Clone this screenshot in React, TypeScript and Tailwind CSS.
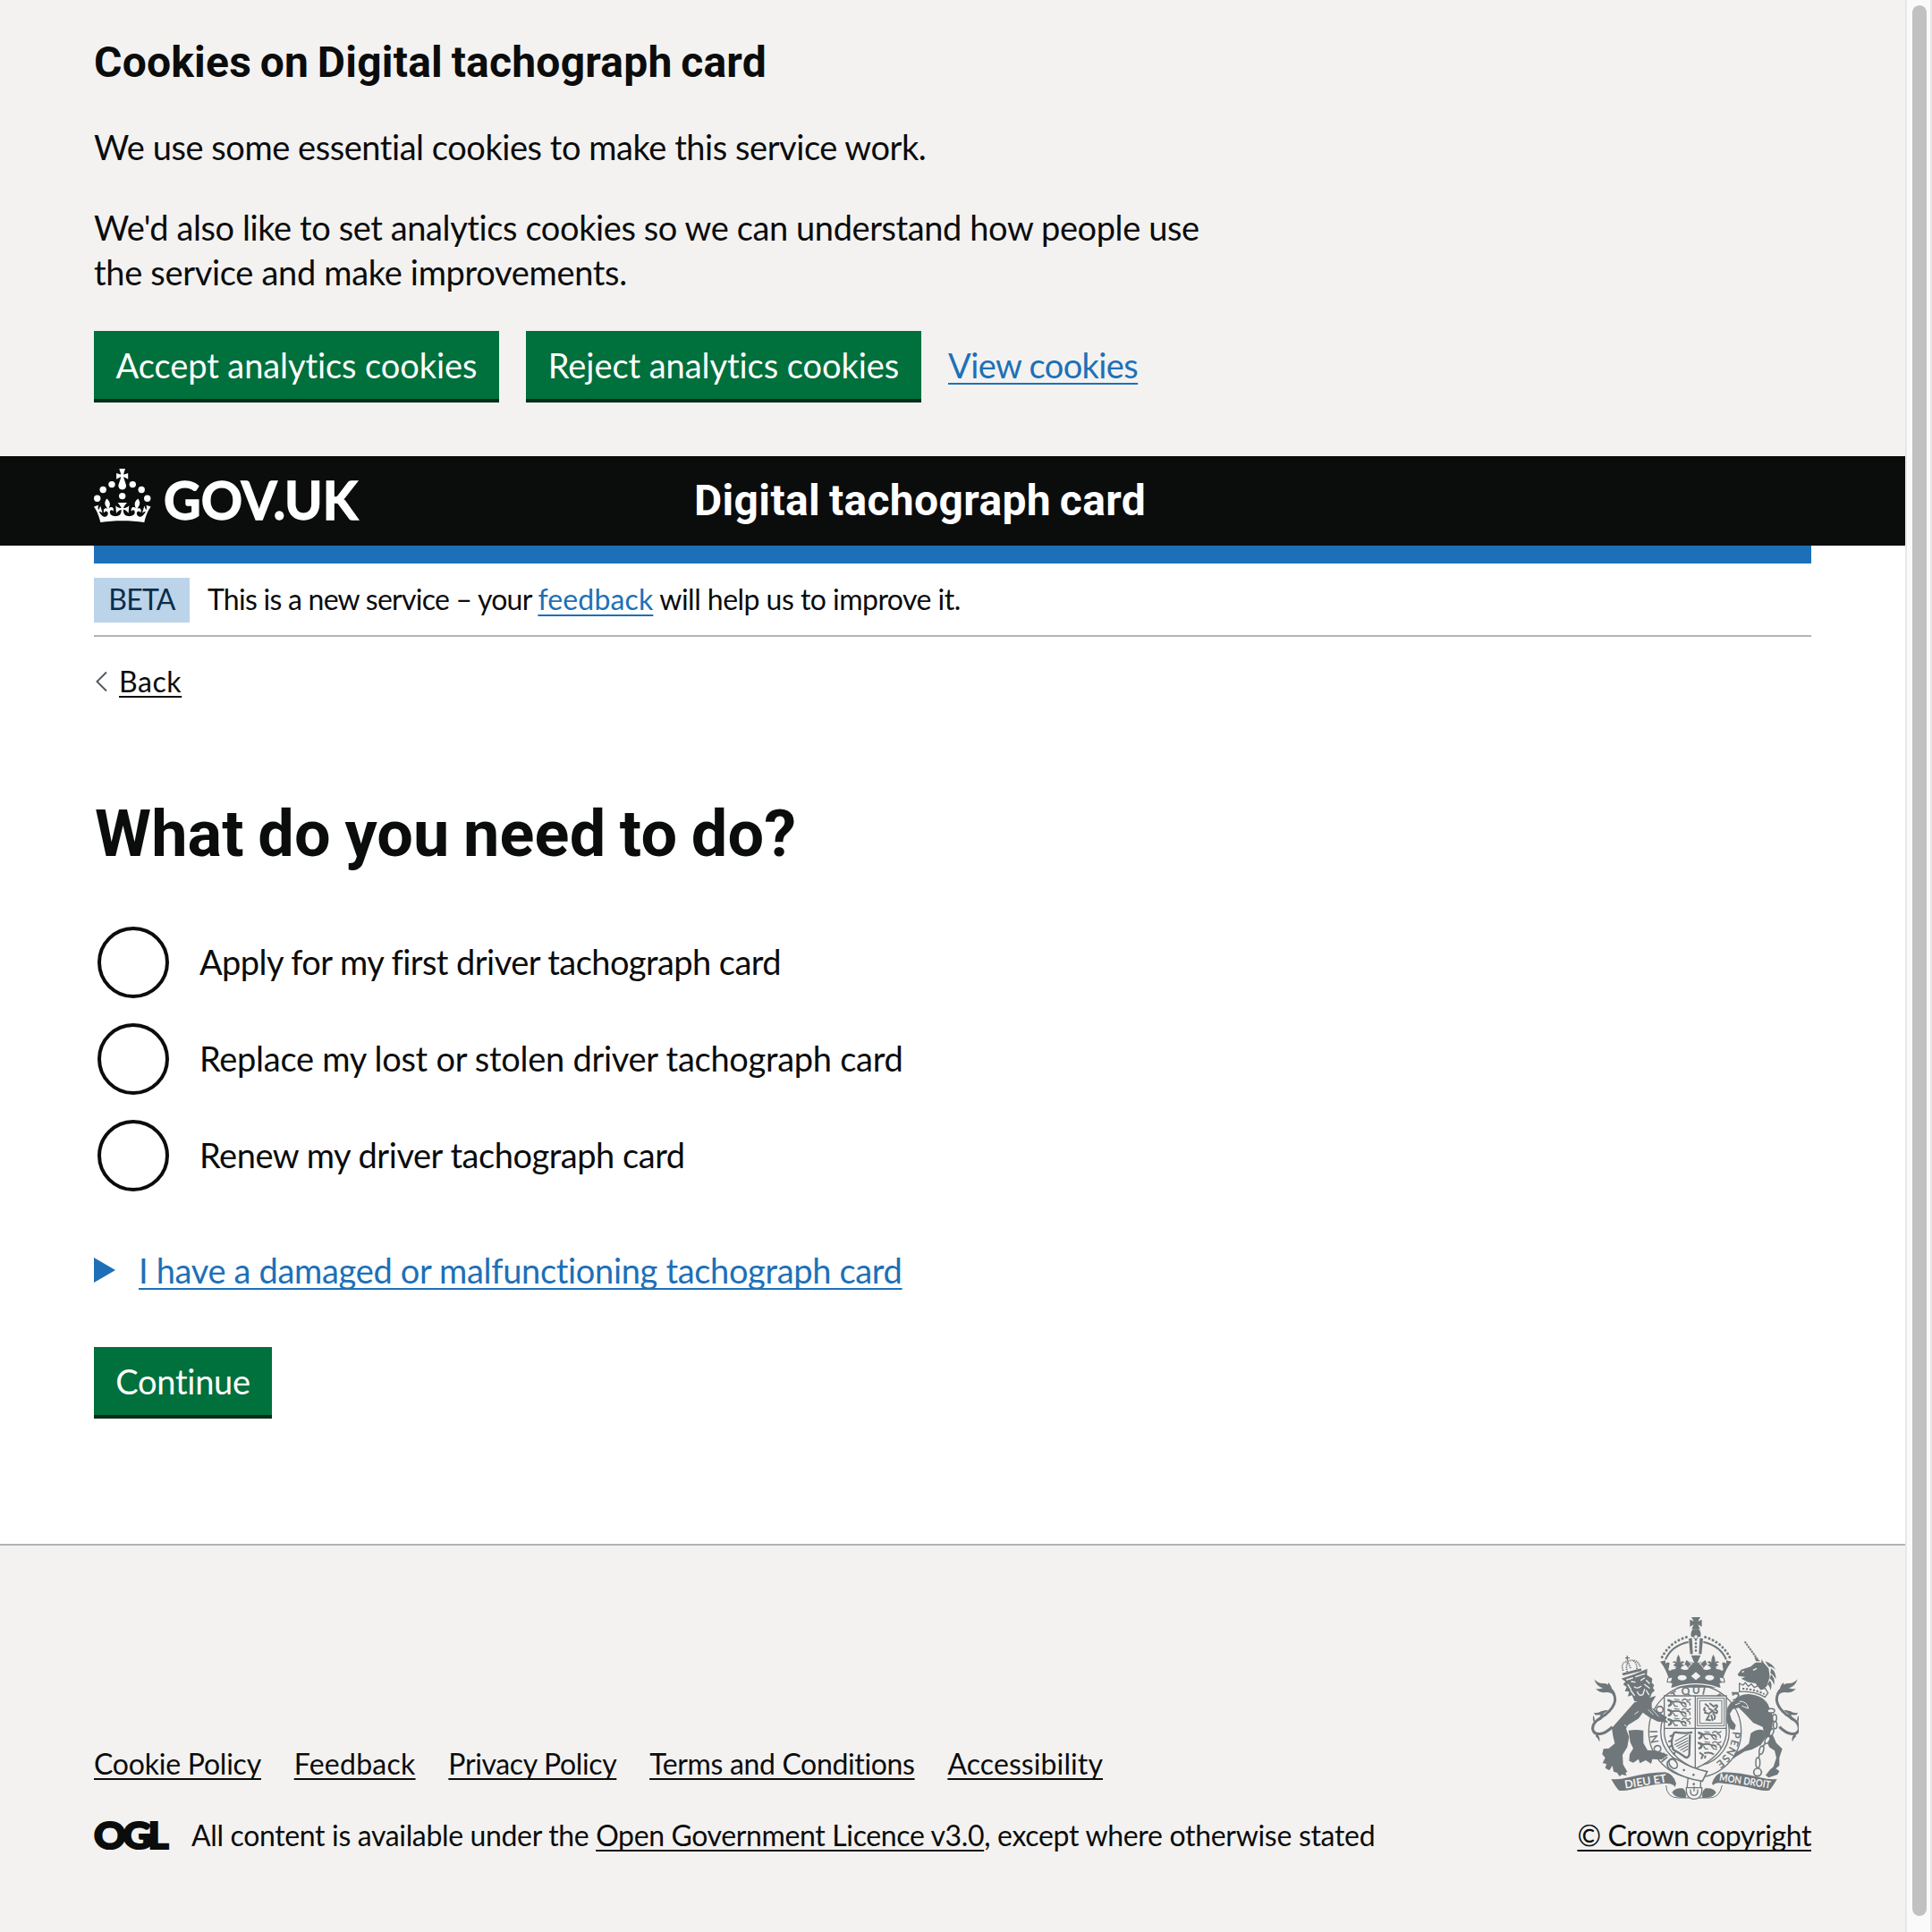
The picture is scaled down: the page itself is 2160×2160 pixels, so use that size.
import type { ReactNode } from "react";

const LINK = "underline decoration-2 [text-decoration-skip-ink:none]";
const GREEN_BUTTON =
  "h-[76px] bg-[#00703c] px-6 text-[38px] leading-[76px] text-white shadow-[0_4px_0_#002d18] whitespace-nowrap";

function Crown() {
  return (
    <g fill="currentColor">
      <circle cx="20" cy="17.6" r="3.7" />
      <circle cx="10.2" cy="23.5" r="3.7" />
      <circle cx="3.7" cy="33.2" r="3.7" />
      <circle cx="31.7" cy="30.6" r="3.7" />
      <circle cx="43.3" cy="17.6" r="3.7" />
      <circle cx="53.2" cy="23.5" r="3.7" />
      <circle cx="59.7" cy="33.2" r="3.7" />
      <path d="M33.1,9.8c.2-.1.3-.3.5-.5l4.6,2.4v-6.8l-4.6,1.5c-.1-.2-.3-.3-.5-.5l1.9-5.9h-6.7l1.9,5.9c-.2.1-.3.3-.5.5l-4.6-1.5v6.8l4.6-2.4c.1.2.3.3.5.5l-2.6,8c-.9,2.8,1.2,5.7,4.1,5.7h0c3,0,5.1-2.9,4.1-5.7l-2.6-8ZM37,37.9s-3.4,3.8-4.1,6.1c2.2,0,4.2-.5,6.4-2.8l-.7,8.5c-2-2.8-4.4-4.1-5.7-3.8.1,3.1.5,6.7,5.8,7.2,3.7.3,6.7-1.5,7-3.8.4-2.6-2-4.3-3.7-1.6-1.4-4.5,2.4-6.1,4.9-3.2-1.9-4.5-1.8-7.7,2.4-10.9,3,4,2.6,7.3-1.2,11.1,2.4-1.3,6.2,0,4,4.6-1.2-2.8-3.7-2.2-4.2.2-.3,1.7.7,3.7,3,4.2,1.9.3,4.7-.9,7-5.9-1.3,0-2.4.7-3.9,1.7l2.4-8c.6,2.3,1.4,3.7,2.2,4.5.6-1.6.5-2.8,0-5.3l5,1.8c-2.6,3.6-5.2,8.7-7.3,17.5-7.4-1.1-15.7-1.7-24.5-1.7h0c-8.8,0-17.1.6-24.5,1.7-2.1-8.9-4.7-13.9-7.3-17.5l5-1.8c-.5,2.5-.6,3.7,0,5.3.8-.8,1.6-2.3,2.2-4.5l2.4,8c-1.5-1-2.6-1.7-3.9-1.7,2.3,5,5.2,6.2,7,5.9,2.3-.4,3.3-2.4,3-4.2-.5-2.4-3-3.1-4.2-.2-2.2-4.6,1.6-6,4-4.6-3.7-3.7-4.2-7.1-1.2-11.1,4.2,3.2,4.3,6.4,2.4,10.9,2.5-2.8,6.3-1.3,4.9,3.2-1.8-2.7-4.1-1-3.7,1.6.3,2.3,3.3,4.1,7,3.8,5.4-.5,5.7-4.2,5.8-7.2-1.3-.2-3.7,1-5.7,3.8l-.7-8.5c2.2,2.3,4.2,2.7,6.4,2.8-.7-2.3-4.1-6.1-4.1-6.1h10.6,0Z" />
    </g>
  );
}

function GovUkLogo() {
  return (
    <svg viewBox="0 0 324 60" className="h-[60px] w-[324px] overflow-visible text-white">
      <Crown />
      <text
        x="78"
        y="56.6"
        fontFamily="Lato, sans-serif"
        fontWeight="700"
        fontSize="59"
        textLength="217"
        lengthAdjust="spacingAndGlyphs"
        fill="currentColor"
        stroke="currentColor"
        strokeWidth="1.4"
      >
        GOV.UK
      </text>
    </svg>
  );
}

function OglLogo() {
  return (
    <svg viewBox="0 0 82 34" className="h-[34px] w-[82px] shrink-0 overflow-visible">
      <text
        x="0"
        y="32.2"
        fontFamily="Lato, sans-serif"
        fontWeight="900"
        fontSize="42.5"
        letterSpacing="-3.5"
        textLength="80"
        lengthAdjust="spacingAndGlyphs"
        fill="#0b0c0c"
        stroke="#0b0c0c"
        strokeWidth="2.2"
      >
        OGL
      </text>
    </svg>
  );
}

const INK = "#6f777a";
const PAPER = "#f3f2f1";

/* Half of the large crown; mirrored about x = 468 for the other half. */
function HalfCrown() {
  return (
    <g>
      <path d="M436,151 C398,162 366,190 351,226" fill="none" stroke={INK} strokeWidth="9" strokeLinecap="round" strokeDasharray="0.1 13.4" />
      <path d="M443,167 C404,176 378,198 366,226" fill="none" stroke={INK} strokeWidth="6" />
      <path d="M444,156 L455,154 L458,208 L449,208Z" fill={INK} />
      <path d="M348,233 L366,229 L366,240 Q372,232 380,238 L376,262 Q398,268 401,250 L392,246 L400,238 L389,236 Q399,228 403,236 Q402,220 409,209 Q417,220 416,236 Q422,228 430,236 L420,240 L430,246 L420,250 Q424,266 444,258 L436,246 L430,244 L436,228 L448,234 L463,238 L452,212 H470 V320 H385 L389,306 L370,300 L376,286 Q366,255 348,233Z" fill={INK} />
      <ellipse cx="422" cy="287" rx="15" ry="9" fill={PAPER} />
      <path d="M374,288 L390,285 L386,300 L372,303Z" fill={PAPER} stroke={INK} strokeWidth="3" />
      <path d="M398,252 Q404,270 424,270 Q446,270 454,252 L462,258 Q450,272 440,272 H400 Q386,268 384,262Z" fill={INK} />
      <path d="M440,228 Q446,238 456,240 Q448,244 443,254" fill="none" stroke={PAPER} strokeWidth="3" />
      <path d="M382,250 Q388,262 400,254 M418,254 Q428,262 438,252" fill="none" stroke={PAPER} strokeWidth="5" />
    </g>
  );
}

function PassantLion({ x, y }: { x: number; y: number }) {
  return (
    <g transform={`translate(${x} ${y})`} fill="none" stroke={INK} strokeLinecap="round">
      <path d="M4,6 L14,10 L12,20 L6,24" strokeWidth="8" />
      <path d="M16,12 Q34,6 48,14 Q60,12 62,20" strokeWidth="6" />
      <path d="M20,16 L26,26 L34,26 M46,16 L54,26 L64,27" strokeWidth="4" />
      <path d="M50,6 Q58,-2 64,4 Q72,8 78,2 M66,10 Q78,12 76,22" strokeWidth="4" />
      <path d="M24,2 L40,4" strokeWidth="3" />
    </g>
  );
}

function Tail() {
  return (
    <g>
      <path d="M180,324 C208,352 200,382 166,410 C138,428 120,438 122,460 C128,484 160,480 188,452" fill="none" stroke={INK} strokeWidth="9" />
      <path d="M127,292 Q140,308 160,306 Q176,308 186,324 Q200,336 198,352 Q186,336 168,336 Q146,340 132,324 Q146,326 156,322 Q134,316 127,292Z" fill={INK} />
      <path d="M174,303 Q190,318 184,332 Q170,326 174,303Z M174,395 Q156,414 138,412 Q128,414 126,404 Q140,408 150,400 Q162,396 174,395Z M162,410 Q158,424 142,432 Q150,420 148,408Z M128,440 Q130,420 124,414 Q120,430 128,440Z M134,474 Q150,486 144,502 Q140,490 132,484Z" fill={INK} />
    </g>
  );
}

function RoyalArms() {
  return (
    <svg viewBox="117 84 696 612" className="ml-[2px] h-[204px] w-[232px]" aria-label="Royal coat of arms">
      {/* Garter */}
      <circle cx="465" cy="467" r="155" fill={PAPER} stroke={INK} strokeWidth="4" />
      <circle cx="465" cy="467" r="115" fill="none" stroke={INK} strokeWidth="4" />
      <path id="garter" d="M465,593 A126,126 0 0 1 465,341 A126,126 0 0 1 465,593" fill="none" />
      <g fontFamily="Lato, sans-serif" fontSize="36" fontWeight="700" fill={INK}>
        <text><textPath href="#garter" startOffset="98" textLength="104">HONI</textPath></text>
        <text><textPath href="#garter" startOffset="236" textLength="46">SO</textPath></text>
        <text><textPath href="#garter" startOffset="320">T</textPath></text>
        <text><textPath href="#garter" startOffset="352" textLength="76">QUI</textPath></text>
        <text><textPath href="#garter" startOffset="458">A</textPath></text>
        <text><textPath href="#garter" startOffset="594" textLength="124">PENSE</textPath></text>
      </g>

      {/* Crown */}
      <HalfCrown />
      <g transform="translate(936 0) scale(-1 1)"><HalfCrown /></g>
      <path d="M453,84 H483 L475,98 L488,92 V116 L475,109 L482,124 H454 L461,109 L448,116 V92 L461,98Z" fill={INK} />
      <path d="M458,124 H478 Q488,136 483,150 H453 Q448,136 458,124Z" fill={INK} />
      <circle cx="468" cy="150" r="7" fill={PAPER} stroke={INK} strokeWidth="3" />
      <path d="M468,160 V206" stroke={INK} strokeWidth="8" strokeLinecap="round" strokeDasharray="0.1 12" />
      <path d="M468,268 L484,282 L468,295 L452,282Z" fill={PAPER} />
      <path d="M340,352 Q395,308 468,308 Q541,308 596,352" fill="none" stroke={PAPER} strokeWidth="4" />

      {/* Shield */}
      <path d="M362,348 H570 V478 Q560,550 466,592 Q372,550 362,478Z" fill={PAPER} stroke={INK} strokeWidth="4" />
      <path d="M466,348 V592 M362,457 H570" stroke={INK} strokeWidth="4" />
      <PassantLion x={372} y={357} />
      <PassantLion x={372} y={389} />
      <PassantLion x={372} y={421} />
      <PassantLion x={474} y={466} />
      <PassantLion x={474} y={500} />
      <path d="M480,538 L492,546 L486,560 M496,540 Q516,536 528,544 M500,548 L498,558" fill="none" stroke={INK} strokeWidth="6" />
      <rect x="473" y="356" width="90" height="92" fill="none" stroke={INK} strokeWidth="3" />
      <rect x="481" y="364" width="74" height="76" fill="none" stroke={INK} strokeWidth="3" />
      <path d="M500,376 L510,384 M516,374 L528,384 Q540,374 540,384 L532,394 Q544,398 538,406 L526,402 M512,390 L524,398 L512,408 L498,404 M526,408 Q536,416 530,426 M512,414 L504,428 L516,430 M498,388 Q492,396 500,398 M520,414 L524,430" fill="none" stroke={INK} strokeWidth="6" strokeLinecap="round" />
      <path d="M396,470 Q440,476 456,470 M396,470 Q380,500 392,528 Q410,538 430,552 Q440,560 446,546 L448,478" fill="none" stroke={INK} strokeWidth="7" />
      <path d="M390,480 L380,484 M386,498 L376,502 M388,514 L378,520 M398,536 L394,546" stroke={INK} strokeWidth="6" />
      <path d="M398,500 L440,478 M396,512 L442,488 M402,518 L442,498 M408,524 L442,507 M416,530 L442,516 M424,536 L442,526" stroke={INK} strokeWidth="3.5" />

      {/* Lion */}
      <Tail />
      <path d="M186,456 L262,370 L300,358 L334,348 L320,372 L320,388 L352,408 L372,420 L366,428 L376,438 L340,434 L312,420 L290,404 L276,424 L240,446 L234,458 L244,486 L238,520 L222,546 L224,578 L238,602 L232,606 L236,616 L220,612 L212,618 L204,606 L192,602 L188,582 L178,598 L164,590 L168,576 L155,574 L164,556 L154,544 L158,526 L176,524 L196,508 L190,482Z" fill={INK} />
      <path d="M242,464 Q268,460 292,464 L292,506 L306,530 L336,532 L376,546 L352,562 L322,560 L318,576 L300,564 L280,574 L276,560 L258,572 L244,566 L246,544 L258,524 L248,504Z" fill={INK} />
      <path d="M320,392 L344,418 M308,394 L326,412 M236,452 L228,444 M262,410 L276,400" stroke={PAPER} strokeWidth="2.5" />
      <path d="M218,290 L262,275 L305,257 L304,278 L322,290 L320,304 L328,312 L324,322 L330,330 L320,340 L316,350 L300,368 L262,366 L254,346 L240,350 L244,334 L230,332 L236,318 L224,310 L232,300Z" fill={INK} />
      <path d="M236,294 L256,288 M266,284 L296,274 M252,300 L264,302 M284,296 L296,288 M262,318 Q272,326 284,316 M272,334 Q276,350 290,344 L296,326 M240,310 L250,326 M302,296 L312,306 M296,310 L312,322 M302,330 L310,344 M250,330 L262,346" fill="none" stroke={PAPER} strokeWidth="4" strokeLinecap="round" />
      <path d="M220,272 L284,256 L286,264 L224,280Z" fill={INK} />
      <path d="M224,264 Q214,236 238,232 Q272,220 282,252 M240,232 L250,258 M238,268 Q232,250 240,234 M270,258 Q272,240 258,230" fill="none" stroke={INK} strokeWidth="5" strokeDasharray="4 3" />
      <path d="M238,213 V230 M231,221 H246" stroke={INK} strokeWidth="4" />

      {/* Unicorn */}
      <g transform="translate(936 0) scale(-1 1)"><Tail /></g>
      <path d="M632,166 L674,224" stroke={INK} strokeWidth="6" strokeDasharray="7 2.5" />
      <path d="M608,276 L620,260 L652,250 L668,236 L688,236 L688,224 L696,238 L712,256 L716,284 L706,316 L686,330 L668,306 L644,302 L620,290 L634,284 L612,282Z" fill={INK} />
      <path d="M660,262 L672,256 M622,268 L630,266" stroke={PAPER} strokeWidth="4" />
      <path d="M700,232 Q724,238 736,262 Q726,250 712,250Z M720,256 Q738,268 736,292 Q728,276 718,272Z M720,276 Q736,290 730,312 Q726,296 716,290Z M716,296 Q726,308 718,330 Q716,314 708,310Z M664,218 Q676,222 684,232 L670,232Z" fill={INK} />
      <path d="M614,306 L626,312 L634,304 L644,316 L654,308 L664,320 L676,314 L686,326 L700,322 L710,338 L700,352 Q660,330 614,334Z" fill={PAPER} stroke={INK} strokeWidth="4" />
      <path d="M624,324 Q660,324 698,342" fill="none" stroke={INK} strokeWidth="6" strokeDasharray="7 5" />
      <path d="M590,346 Q604,334 612,346 Q606,362 592,362 M588,338 L612,338" fill="none" stroke={INK} strokeWidth="5" />
      <path d="M572,398 Q574,372 602,362 Q612,342 644,342 Q700,346 714,386 L728,420 L722,470 L738,506 L758,526 L748,556 L748,582 L736,592 L748,600 L742,612 L712,622 L702,614 L716,596 L728,586 L738,556 L732,532 L714,520 L702,492 L692,452 L660,438 L636,412 L612,388 L592,392 L582,408 L588,428 L602,446 L598,462 L584,460 L572,436Z" fill={INK} />
      <path d="M652,474 Q676,456 696,464 L702,488 L686,512 L656,528 L632,534 L606,550 L592,560 L598,540 L626,524 L646,508Z" fill={INK} />
      <path d="M614,366 Q640,366 644,390 L622,382 M600,378 L616,372" fill="none" stroke={PAPER} strokeWidth="3" />
      <g fill={PAPER} stroke={INK} strokeWidth="4.5">
        <ellipse cx="720" cy="398" rx="12" ry="7" />
        <ellipse cx="732" cy="422" rx="7" ry="12" />
        <ellipse cx="734" cy="446" rx="6" ry="12" />
        <ellipse cx="722" cy="470" rx="6" ry="12" transform="rotate(20 722 470)" />
        <ellipse cx="708" cy="496" rx="7" ry="13" transform="rotate(28 708 496)" />
        <ellipse cx="688" cy="530" rx="7" ry="14" transform="rotate(16 688 530)" />
        <ellipse cx="676" cy="572" rx="7" ry="17" />
      </g>
      <path d="M700,508 L692,520 M682,542 L678,558" stroke={INK} strokeWidth="5" />
      <circle cx="675" cy="604" r="13" fill={PAPER} stroke={INK} strokeWidth="5" />

      {/* Motto scroll */}
      <path d="M368,648 Q370,690 410,690 H514 Q548,690 556,648" fill={PAPER} stroke={INK} strokeWidth="3" />
      <path d="M388,672 Q396,656 424,658 Q438,668 434,690 Q400,692 388,672Z M536,672 Q528,656 500,658 Q486,668 490,690 Q524,692 536,672Z" fill={INK} />
      <path d="M184,627 Q210,630 240,622 Q310,604 364,604 Q392,608 402,642 L398,654 Q392,640 362,642 Q320,645 250,662 Q225,668 210,665 Q200,656 184,627Z" fill={INK} />
      <path d="M740,627 Q714,630 684,622 Q614,604 560,604 Q532,608 522,642 L526,648 Q534,636 562,642 Q604,645 674,662 Q699,668 714,665 Q724,656 740,627Z" fill={INK} />
      <g fontFamily="Lato, sans-serif" fontSize="38" fontWeight="700" fill={PAPER}>
        <text transform="translate(231 659) rotate(-9)" textLength="142" lengthAdjust="spacingAndGlyphs">DIEU ET</text>
        <text transform="translate(545 632) rotate(9)" textLength="174" lengthAdjust="spacingAndGlyphs" fontSize="35">MON DROIT</text>
      </g>

      {/* Buckle and strap */}
      <path d="M442,622 L438,660 H484 V622Z" fill={PAPER} stroke={INK} strokeWidth="4" />
      <path d="M372,572 Q386,548 414,566 Q450,590 506,602 L490,634 Q430,626 388,598 Q370,590 372,572Z" fill={PAPER} stroke={INK} strokeWidth="5" />
      <ellipse cx="392" cy="576" rx="12" ry="17" fill="none" stroke={INK} strokeWidth="5" transform="rotate(-35 392 576)" />
      <circle cx="428" cy="597" r="4" fill={INK} />
      <circle cx="460" cy="613" r="4" fill={INK} />
      <circle cx="461" cy="644" r="4" fill={INK} />
      <path d="M436,656 H488 Q490,694 462,694 Q434,694 436,656Z" fill={PAPER} stroke={INK} strokeWidth="4" />
      <path d="M450,662 Q448,682 462,682 Q476,682 474,662 M462,652 V668" fill="none" stroke={INK} strokeWidth="4" />
    </svg>
  );
}

function Radio({ children, spacing }: { children: ReactNode; spacing: string }) {
  return (
    <label className="flex h-20 items-center">
      <span className="ml-1 size-20 shrink-0 rounded-full border-4 border-[#0b0c0c] bg-white" />
      <span className={`ml-[34px] pb-[3px] text-[38px] leading-[50px] ${spacing}`}>{children}</span>
    </label>
  );
}

const FOOTER_LINKS = [
  { label: "Cookie Policy", spacing: "tracking-[-0.23px]" },
  { label: "Feedback", spacing: "tracking-[0.26px]" },
  { label: "Privacy Policy", spacing: "tracking-[-0.36px]" },
  { label: "Terms and Conditions", spacing: "tracking-[-0.35px]" },
  { label: "Accessibility", spacing: "tracking-[0.1px]" },
];

export default function App() {
  return (
    <div className="flex h-[2160px] w-[2160px] overflow-hidden bg-white font-[Lato,sans-serif] text-[#0b0c0c] [font-variant-ligatures:none]">
      <div className="flex w-[2130px] flex-col whitespace-nowrap">
        <section className="h-[510px] bg-[#f3f2f1] px-[105px] pt-10">
          <h2 className="font-[Roboto,sans-serif] text-[48px] leading-[60px] font-bold tracking-[0.22px] [word-spacing:-2.5px]">
            Cookies on Digital tachograph card
          </h2>
          <p className="mt-[39px] text-[38px] leading-[50px] tracking-[-0.45px]">
            We use some essential cookies to make this service work.
          </p>
          <p className="mt-10 text-[38px] leading-[50px]">
            <span className="tracking-[-0.4px]">
              We'd also like to set analytics cookies so we can understand how people use
            </span>
            <br />
            <span className="tracking-[-0.32px]">the service and make improvements.</span>
          </p>
          <div className="mt-[41px] flex items-center gap-[30px]">
            <button className={`${GREEN_BUTTON} w-[453px] tracking-[-0.08px]`}>Accept analytics cookies</button>
            <button className={`${GREEN_BUTTON} w-[442px] tracking-[-0.06px]`}>Reject analytics cookies</button>
            <a className={`${LINK} text-[38px] leading-[50px] tracking-[-0.6px] text-[#1d70b8] underline-offset-[5px]`}>
              View cookies
            </a>
          </div>
        </section>

        <header className="flex h-[100px] items-center bg-[#0b0c0c] px-[105px] text-white">
          <div className="w-[671px] pb-3">
            <GovUkLogo />
          </div>
          <span className="font-[Roboto,sans-serif] text-[48px] leading-[60px] font-bold tracking-[0.35px] [word-spacing:-2.5px]">
            Digital tachograph card
          </span>
        </header>

        <main className="mx-[105px] flex h-[1116px] flex-col items-start">
          <div className="h-5 w-full bg-[#1d70b8]" />
          <div className="flex h-[82px] w-full items-start border-b-2 border-[#b1b4b6] pt-4 text-[32px]">
            <strong className="h-[50px] w-[107px] bg-[#bbd4ea] text-center leading-[48px] font-normal tracking-[-0.7px] text-[#0c2d4a]">
              BETA
            </strong>
            <span className="ml-5 leading-[48px] whitespace-pre">
              <span className="tracking-[-0.75px]">This is a new service – your </span>
              <a className={`${LINK} tracking-[0.15px] text-[#1d70b8] underline-offset-[5px]`}>feedback</a>
              <span className="tracking-[-0.53px]"> will help us to improve it.</span>
            </span>
          </div>
          <div className="mt-[30px] flex items-center text-[32px] leading-10">
            <svg viewBox="0 0 13 22" className="ml-[2px] h-[22px] w-[13px]" fill="none" stroke="#505a5f" strokeWidth="2">
              <path d="M12 0.5 L1.5 11 L12 21.5" />
            </svg>
            <a className={`${LINK} ml-[13px] tracking-[0.58px] underline-offset-[4px]`}>Back</a>
          </div>

          <h1 className="mt-[111px] ml-px font-[Roboto,sans-serif] text-[72px] leading-20 font-bold tracking-[0.15px] [word-spacing:-2.5px]">
            What do you need to do?
          </h1>
          <div className="mt-[63px] flex flex-col gap-7">
            <Radio spacing="tracking-[-0.56px]">Apply for my first driver tachograph card</Radio>
            <Radio spacing="tracking-[-0.28px]">Replace my lost or stolen driver tachograph card</Radio>
            <Radio spacing="tracking-[-0.46px]">Renew my driver tachograph card</Radio>
          </div>
          <div className="mt-[63px] flex items-center text-[38px] leading-[50px] text-[#1d70b8]">
            <svg viewBox="0 0 24 28" className="h-7 w-6" fill="currentColor">
              <path d="M0 0 L24 14 L0 28Z" />
            </svg>
            <a className={`${LINK} ml-[26px] tracking-[-0.33px] underline-offset-[5px]`}>
              I have a damaged or malfunctioning tachograph card
            </a>
          </div>
          <button className={`${GREEN_BUTTON} mt-[61px] w-[199px] tracking-[-0.25px]`}>Continue</button>
        </main>

        <footer className="flex h-[434px] items-start justify-between border-t-2 border-[#b1b4b6] bg-[#f3f2f1] px-[105px] text-[32px] leading-10">
          <div className="pt-[224px]">
            <div className="flex gap-[36.8px]">
              {FOOTER_LINKS.map((link) => (
                <a key={link.label} className={`${LINK} underline-offset-[4px] ${link.spacing}`}>
                  {link.label}
                </a>
              ))}
            </div>
            <div className="mt-10 flex items-center">
              <OglLogo />
              <span className="ml-[27px] whitespace-pre">
                <span className="tracking-[-0.35px]">All content is available under the </span>
                <a className={`${LINK} tracking-[-0.37px] underline-offset-[4px]`}>Open Government Licence v3.0</a>
                <span className="tracking-[-0.31px]">, except where otherwise stated</span>
              </span>
            </div>
          </div>
          <div className="flex flex-col items-center pt-20">
            <RoyalArms />
            <a className={`${LINK} mt-5 tracking-[-0.4px] underline-offset-[4px]`}>© Crown copyright</a>
          </div>
        </footer>
      </div>

      <div className="flex w-[30px] justify-start border-x-2 border-[#e8e8e8] bg-[#fafafa] pt-[6px] pl-[6px]">
        <div className="h-[2136px] w-4 rounded-full bg-[#c1c1c1]" />
      </div>
    </div>
  );
}
